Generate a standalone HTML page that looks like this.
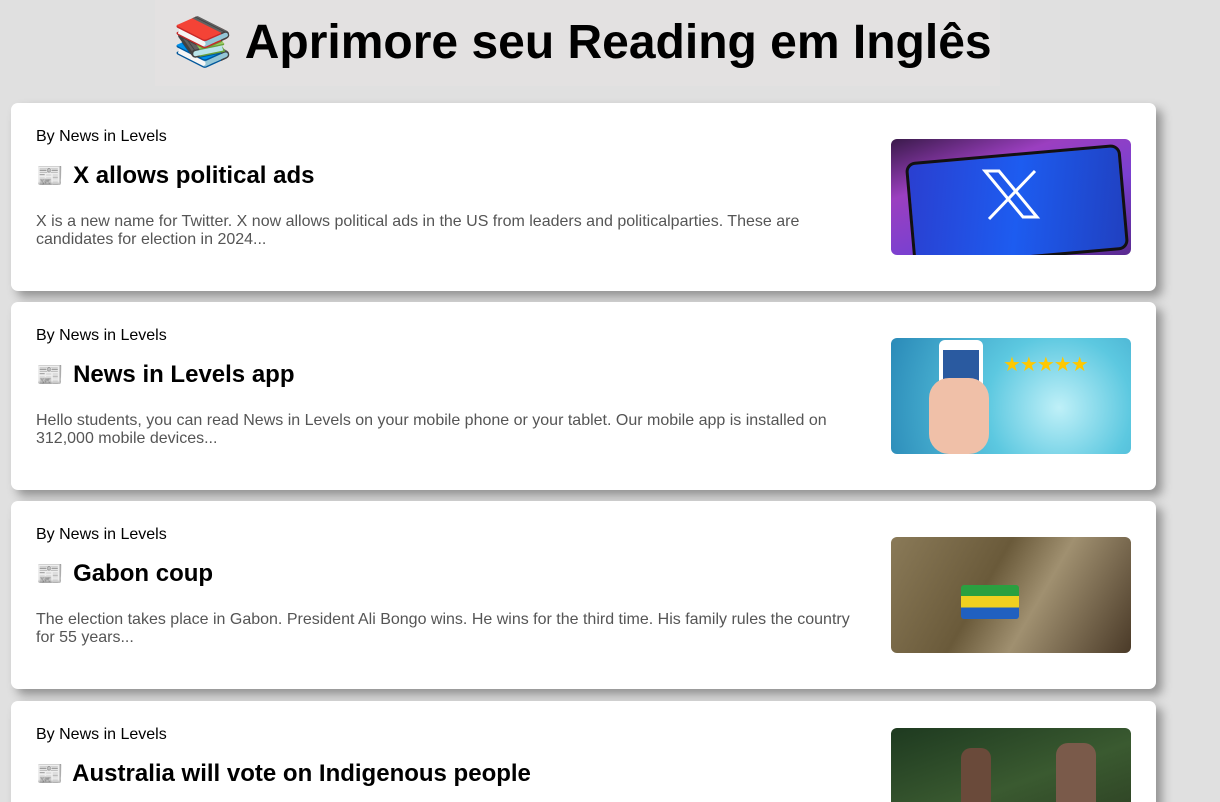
<!DOCTYPE html>
<html><head><meta charset="utf-8"><style>
html,body{margin:0;width:1220px;height:802px;overflow:hidden}
body{background:#e0e0e0;font-family:"Liberation Sans",Arial,sans-serif;position:relative}
.hdr{position:absolute;left:155px;top:0;width:845px;height:86px;background:#e3e1e1}
h1{position:absolute;left:0;width:1165px;top:15px;margin:0;text-align:center;font-size:48px;font-weight:bold;color:#000;line-height:56px}
.card{position:absolute;left:11px;width:1145px;height:188px;background:#fff;border-radius:7px;box-shadow:6px 6px 10px rgba(0,0,0,.35)}
.by{position:absolute;left:25px;top:25px;font-size:16px;color:#000;line-height:18px}
.t{position:absolute;left:25px;top:58px;font-size:24px;font-weight:bold;color:#000;line-height:30px}
.t span{font-size:22px;margin-right:3px}
.d{position:absolute;left:25px;top:110px;width:815px;font-size:16px;line-height:18px;color:#555}
.img{position:absolute;left:880px;top:36px;width:240px;height:116px;border-radius:6px;overflow:hidden}
</style></head><body>
<div class="hdr"></div>
<h1>📚 Aprimore seu Reading em Inglês</h1>

<div class="card" style="top:103px">
<div class="by">By News in Levels</div>
<div class="t"><span>📰</span> X allows political ads</div>
<div class="d">X is a new name for Twitter. X now allows political ads in the US from leaders and politicalparties. These are candidates for election in 2024...</div>
<div class="img" style="background:linear-gradient(160deg,#3a1a4a,#9b3fc0 30%,#7a40d0 60%,#5a2a90)">
<div style="position:absolute;left:18px;top:14px;width:210px;height:100px;background:linear-gradient(100deg,#2a3fd0,#1d5cf0 50%,#2040c0);border-radius:10px;transform:rotate(-5deg);border:3px solid #111"></div>
<svg style="position:absolute;left:90px;top:30px" width="60" height="52" viewBox="0 0 60 52"><path d="M4 2h14l38 46H42z" fill="none" stroke="#fff" stroke-width="3"/><path d="M54 2L8 50" stroke="#fff" stroke-width="3"/></svg>
</div>
</div>

<div class="card" style="top:302px">
<div class="by">By News in Levels</div>
<div class="t"><span>📰</span> News in Levels app</div>
<div class="d">Hello students, you can read News in Levels on your mobile phone or your tablet. Our mobile app is installed on 312,000 mobile devices...</div>
<div class="img" style="background:radial-gradient(circle at 70% 60%,#bff0f8,#5cc8e0 40%,#2a8ab8)">
<div style="position:absolute;left:48px;top:2px;width:44px;height:92px;background:#fff;border-radius:6px"></div>
<div style="position:absolute;left:52px;top:12px;width:36px;height:70px;background:#2a5aa0"></div>
<div style="position:absolute;left:112px;top:14px;color:#ffc800;font-size:20px;letter-spacing:-1px">★★★★★</div>
<div style="position:absolute;left:38px;top:40px;width:60px;height:76px;background:#f0c0a8;border-radius:20px"></div>
</div>
</div>

<div class="card" style="top:501px">
<div class="by">By News in Levels</div>
<div class="t"><span>📰</span> Gabon coup</div>
<div class="d">The election takes place in Gabon. President Ali Bongo wins. He wins for the third time. His family rules the country for 55 years...</div>
<div class="img" style="background:linear-gradient(120deg,#8a7a58,#6a5a3a 40%,#a09070 60%,#4a3a28)">
<div style="position:absolute;left:70px;top:48px;width:58px;height:34px;border-radius:3px;background:linear-gradient(#2aa040 33%,#f0d020 33% 66%,#2060c0 66%)"></div>
</div>
</div>

<div class="card" style="top:701px">
<div class="by">By News in Levels</div>
<div class="t"><span>📰</span> Australia will vote on Indigenous people</div>
<div class="img" style="top:27px;background:linear-gradient(160deg,#1e3a20,#3a5a30 50%,#2a3a20)">
<div style="position:absolute;left:70px;top:20px;width:30px;height:80px;background:#6a4a3a;border-radius:10px"></div>
<div style="position:absolute;left:165px;top:15px;width:40px;height:85px;background:#7a5a4a;border-radius:12px"></div>
</div>
</div>
</body></html>
